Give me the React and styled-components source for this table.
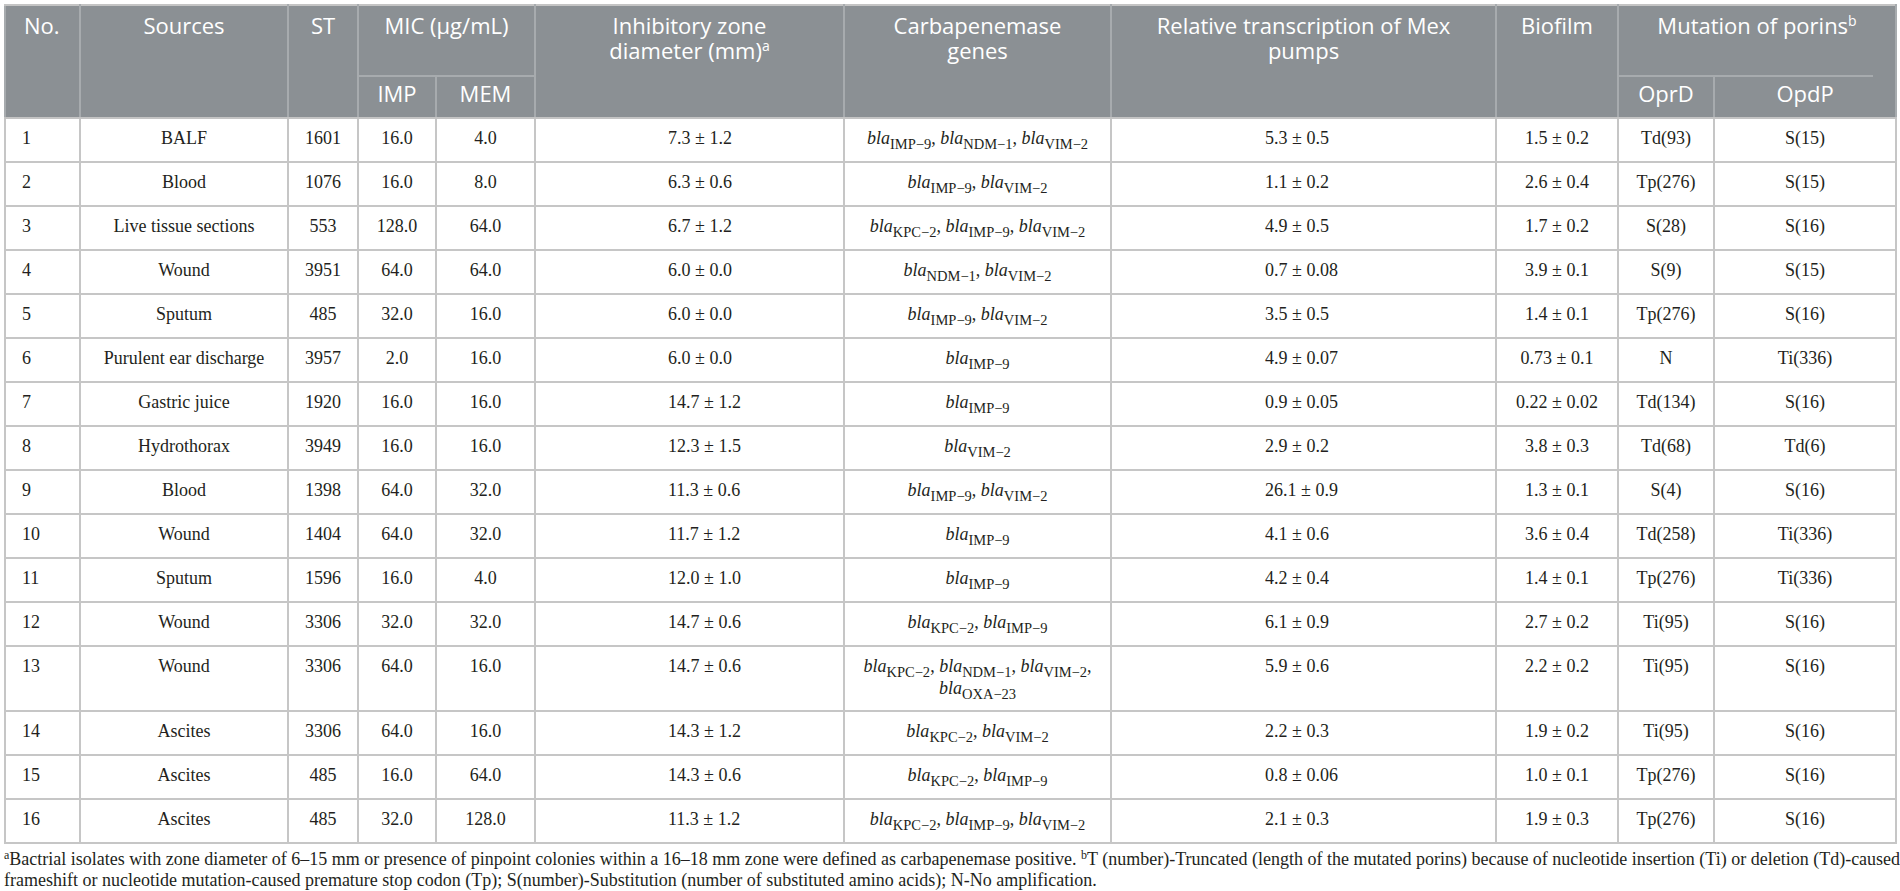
import styled, { createGlobalStyle } from 'styled-components'

const GlobalStyle = createGlobalStyle`
  body {
    margin: 0;
    background: #fff;
  }
`

const COLS = [75, 208, 70, 78, 99, 309, 267, 385, 122, 96, 182]

const rows = [
  ['1', 'BALF', '1601', '16.0', '4.0', '7.3', '1.2', ['IMP−9', 'NDM−1', 'VIM−2'], '5.3', '0.5', '1.5', '0.2', 'Td(93)', 'S(15)'],
  ['2', 'Blood', '1076', '16.0', '8.0', '6.3', '0.6', ['IMP−9', 'VIM−2'], '1.1', '0.2', '2.6', '0.4', 'Tp(276)', 'S(15)'],
  ['3', 'Live tissue sections', '553', '128.0', '64.0', '6.7', '1.2', ['KPC−2', 'IMP−9', 'VIM−2'], '4.9', '0.5', '1.7', '0.2', 'S(28)', 'S(16)'],
  ['4', 'Wound', '3951', '64.0', '64.0', '6.0', '0.0', ['NDM−1', 'VIM−2'], '0.7', '0.08', '3.9', '0.1', 'S(9)', 'S(15)'],
  ['5', 'Sputum', '485', '32.0', '16.0', '6.0', '0.0', ['IMP−9', 'VIM−2'], '3.5', '0.5', '1.4', '0.1', 'Tp(276)', 'S(16)'],
  ['6', 'Purulent ear discharge', '3957', '2.0', '16.0', '6.0', '0.0', ['IMP−9'], '4.9', '0.07', '0.73', '0.1', 'N', 'Ti(336)'],
  ['7', 'Gastric juice', '1920', '16.0', '16.0', '14.7', '1.2', ['IMP−9'], '0.9', '0.05', '0.22', '0.02', 'Td(134)', 'S(16)'],
  ['8', 'Hydrothorax', '3949', '16.0', '16.0', '12.3', '1.5', ['VIM−2'], '2.9', '0.2', '3.8', '0.3', 'Td(68)', 'Td(6)'],
  ['9', 'Blood', '1398', '64.0', '32.0', '11.3', '0.6', ['IMP−9', 'VIM−2'], '26.1', '0.9', '1.3', '0.1', 'S(4)', 'S(16)'],
  ['10', 'Wound', '1404', '64.0', '32.0', '11.7', '1.2', ['IMP−9'], '4.1', '0.6', '3.6', '0.4', 'Td(258)', 'Ti(336)'],
  ['11', 'Sputum', '1596', '16.0', '4.0', '12.0', '1.0', ['IMP−9'], '4.2', '0.4', '1.4', '0.1', 'Tp(276)', 'Ti(336)'],
  ['12', 'Wound', '3306', '32.0', '32.0', '14.7', '0.6', ['KPC−2', 'IMP−9'], '6.1', '0.9', '2.7', '0.2', 'Ti(95)', 'S(16)'],
  ['13', 'Wound', '3306', '64.0', '16.0', '14.7', '0.6', ['KPC−2', 'NDM−1', 'VIM−2', 'OXA−23'], '5.9', '0.6', '2.2', '0.2', 'Ti(95)', 'S(16)'],
  ['14', 'Ascites', '3306', '64.0', '16.0', '14.3', '1.2', ['KPC−2', 'VIM−2'], '2.2', '0.3', '1.9', '0.2', 'Ti(95)', 'S(16)'],
  ['15', 'Ascites', '485', '16.0', '64.0', '14.3', '0.6', ['KPC−2', 'IMP−9'], '0.8', '0.06', '1.0', '0.1', 'Tp(276)', 'S(16)'],
  ['16', 'Ascites', '485', '32.0', '128.0', '11.3', '1.2', ['KPC−2', 'IMP−9', 'VIM−2'], '2.1', '0.3', '1.9', '0.3', 'Tp(276)', 'S(16)'],
]

function PlusMinus({ mean, sd }) {
  return <>{mean} ± {sd}</>
}

function Genes({ list }) {
  return list.map((g, i) => (
    <span key={g}>
      <Bla>bla</Bla>
      <Sub>{g}</Sub>
      {i < list.length - 1 ? ', ' : null}
      {i === 2 && list.length > 3 ? <br /> : null}
    </span>
  ))
}

export default function App() {
  return (
    <Page>
      <GlobalStyle />
      <Table>
        <colgroup>
          {COLS.map((w, i) => <col key={i} style={{ width: w }} />)}
        </colgroup>
        <thead>
          <HeadRow $h={71}>
            <Head rowSpan={2} $align="left">No.</Head>
            <Head rowSpan={2}>Sources</Head>
            <Head rowSpan={2}>ST</Head>
            <Head colSpan={2} $rule>MIC (μg/mL)</Head>
            <Head rowSpan={2}>Inhibitory zone<br />diameter (mm)<Sup>a</Sup></Head>
            <Head rowSpan={2}>Carbapenemase<br />genes</Head>
            <Head rowSpan={2}>Relative transcription of Mex<br />pumps</Head>
            <Head rowSpan={2}>Biofilm</Head>
            <Head colSpan={2} $rule $short>Mutation of porins<Sup>b</Sup></Head>
          </HeadRow>
          <HeadRow $h={42}>
            <SubHead>IMP</SubHead>
            <SubHead>MEM</SubHead>
            <SubHead>OprD</SubHead>
            <SubHead>OpdP</SubHead>
          </HeadRow>
        </thead>
        <tbody>
          {rows.map(r => (
            <tr key={r[0]}>
              <Cell $align="left">{r[0]}</Cell>
              <Cell>{r[1]}</Cell>
              <Cell>{r[2]}</Cell>
              <Cell>{r[3]}</Cell>
              <Cell>{r[4]}</Cell>
              <Cell $align="left" $indent={132}><PlusMinus mean={r[5]} sd={r[6]} /></Cell>
              <GeneCell><Genes list={r[7]} /></GeneCell>
              <Cell $align="left" $indent={153}><PlusMinus mean={r[8]} sd={r[9]} /></Cell>
              <Cell><PlusMinus mean={r[10]} sd={r[11]} /></Cell>
              <Cell>{r[12]}</Cell>
              <Cell>{r[13]}</Cell>
            </tr>
          ))}
        </tbody>
      </Table>
      <Note>
        <NoteSup>a</NoteSup>Bactrial isolates with zone diameter of 6–15 mm or presence of pinpoint colonies within a 16–18 mm zone were defined as carbapenemase positive. <NoteSup>b</NoteSup>T (number)-Truncated (length of the mutated porins) because of nucleotide insertion (Ti) or deletion (Td)-caused<br />
        frameshift or nucleotide mutation-caused premature stop codon (Tp); S(number)-Substitution (number of substituted amino acids); N-No amplification.
      </Note>
    </Page>
  )
}

const Page = styled.div`
  padding: 4px 4px 0 4px;
`

const Table = styled.table`
  border-collapse: collapse;
  table-layout: fixed;
  width: 1892px;
  font-family: "Liberation Serif", "Times New Roman", serif;
  font-size: 18px;
  color: #231f20;
  border: 2px solid #c4c4c4;
`

const HeadRow = styled.tr`
  height: ${p => p.$h}px;
`

const Head = styled.th`
  position: relative;
  background: #8b9094;
  color: #fff;
  font-family: "Open Sans", "Noto Sans", sans-serif;
  font-size: 22px;
  font-weight: 400;
  line-height: 25px;
  text-align: ${p => p.$align || 'center'};
  vertical-align: top;
  padding: 7px 8px 0 ${p => (p.$align === 'left' ? '18px' : '8px')};
  border-left: 2px solid #a7abae;
  border-right: 2px solid #a7abae;
  border-top: 2px solid #c4c4c4;
  border-bottom: ${p => (p.$rule ? '0' : '2px solid #c4c4c4')};
  &::after {
    content: ${p => (p.$rule ? "''" : 'none')};
    position: absolute;
    left: 0;
    right: ${p => (p.$short ? '22px' : '0')};
    bottom: -1px;
    height: 2px;
    background: #a7abae;
  }
`

const SubHead = styled.th`
  background: #8b9094;
  color: #fff;
  font-family: "Open Sans", "Noto Sans", sans-serif;
  font-size: 22px;
  font-weight: 400;
  line-height: 25px;
  text-align: center;
  vertical-align: middle;
  padding: 0 6px 6px;
  border-left: 2px solid #a7abae;
  border-right: 2px solid #a7abae;
  border-bottom: 2px solid #c4c4c4;
`

const Sup = styled.sup`
  font-size: 14px;
  line-height: 0;
  vertical-align: 8px;
`

const Cell = styled.td`
  text-align: ${p => p.$align || 'center'};
  vertical-align: top;
  line-height: 24px;
  padding: 7px 8px 11px ${p => (p.$indent ? `${p.$indent}px` : p.$align === 'left' ? '16px' : '8px')};
  border: 2px solid #c6c6c6;
  white-space: nowrap;
`

const GeneCell = styled(Cell)`
  line-height: 22px;
  padding-top: 8px;
`

const Bla = styled.i`
  font-style: italic;
`

const Sub = styled.span`
  font-size: 14.5px;
  position: relative;
  top: 5px;
  line-height: 0;
`

const Note = styled.p`
  margin: 5px 0 0 0;
  font-family: "Liberation Serif", "Times New Roman", serif;
  font-size: 18px;
  line-height: 21px;
  color: #231f20;
  white-space: nowrap;
`

const NoteSup = styled.sup`
  font-size: 12px;
  line-height: 0;
  vertical-align: 6px;
`
